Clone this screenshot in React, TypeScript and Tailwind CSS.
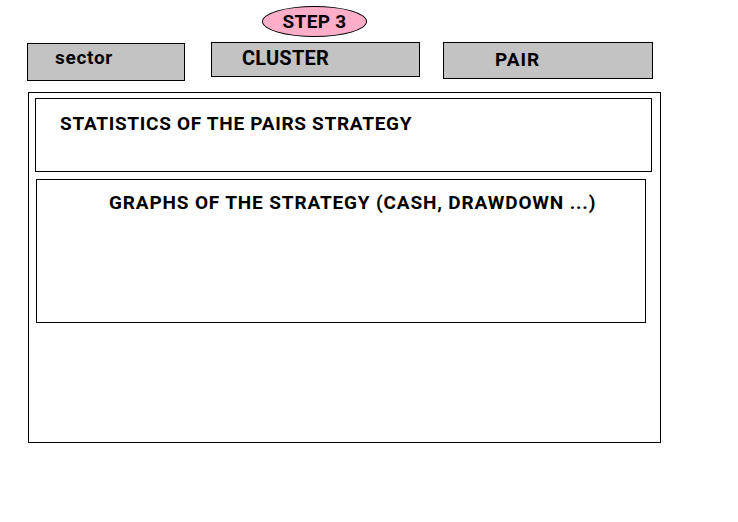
export default function App() {
  return (
    <div className="w-[738px] h-[522px] bg-white pt-[6px] font-['Roboto',sans-serif] font-bold text-black">
      {/* step badge */}
      <div className="ml-[262px] flex h-[31px] w-[105px] items-center justify-center rounded-[50%] border border-black bg-[#ffaec9] text-[19px] leading-none tracking-[0.3px]">
        STEP 3
      </div>

      {/* tabs */}
      <div className="mt-[5px] flex items-start">
        <div className="ml-[27px] mt-[1px] h-[38px] w-[158px] border border-black bg-[#c3c3c3] pl-[27px] pt-[4px] text-[19px] leading-none tracking-[0.7px]">
          sector
        </div>
        <div className="ml-[26px] h-[35px] w-[209px] border border-black bg-[#c3c3c3] pl-[30px] pt-[5px] text-[20px] leading-none tracking-[0.2px]">
          CLUSTER
        </div>
        <div className="ml-[23px] h-[37px] w-[210px] border border-black bg-[#c3c3c3] pl-[51px] pt-[7px] text-[19px] leading-none tracking-[1px]">
          PAIR
        </div>
      </div>

      {/* main panel */}
      <div className="ml-[28px] mt-[11px] flex h-[351px] w-[633px] flex-col border border-black pt-[5px]">
        <div className="ml-[6px] h-[74px] w-[617px] border border-black pl-[24px] pt-[15px] text-[19px] leading-none tracking-[0.7px]">
          STATISTICS OF THE PAIRS STRATEGY
        </div>
        <div className="ml-[7px] mt-[7px] h-[144px] w-[610px] border border-black pl-[72px] pt-[13px] text-[19px] leading-none tracking-[0.85px]">
          GRAPHS OF THE STRATEGY (CASH, DRAWDOWN ...)
        </div>
      </div>
    </div>
  );
}
